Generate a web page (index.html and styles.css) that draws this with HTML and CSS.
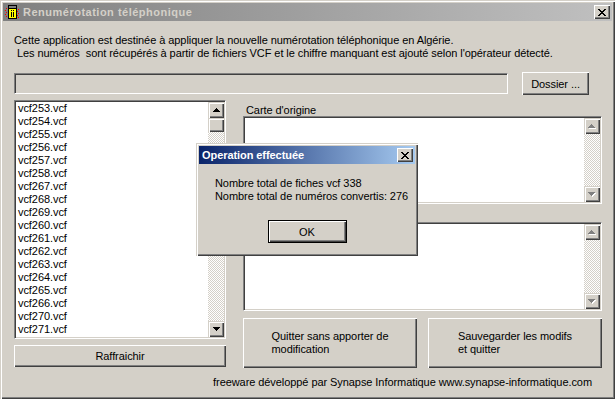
FILE: index.html
```html
<!DOCTYPE html>
<html lang="fr">
<head>
<meta charset="utf-8">
<title>Renumérotation téléphonique</title>
<link rel="stylesheet" href="styles.css">
</head>
<body>
<div class="window">
  <div class="titlebar">
    <svg class="app-icon" width="16" height="16" viewBox="0 0 16 16" shape-rendering="crispEdges">
      <rect x="4" y="1" width="9" height="14" fill="#000"/>
      <rect x="5" y="2" width="7" height="2" fill="#808080"/>
      <rect x="5" y="5" width="7" height="9" fill="#ffff00"/>
      <rect x="7" y="6" width="1" height="1" fill="#000"/>
      <rect x="9" y="6" width="1" height="1" fill="#000"/>
      <rect x="7" y="8" width="1" height="5" fill="#000"/>
      <rect x="9" y="8" width="1" height="5" fill="#000"/>
      <path d="M2 4h1v1H2zM1 6h1v1H1zM2 8h1v1H2zM1 10h1v1H1zM2 12h1v1H2zM14 5h1v1h-1zM13 7h1v1h-1zM14 9h1v1h-1zM13 11h1v1h-1zM14 13h1v1h-1z" fill="#ff0000"/>
    </svg>
    <span class="title">Renumérotation téléphonique</span>
    <span class="cap-btn">
      <svg width="8" height="7" viewBox="0 0 8 7" shape-rendering="crispEdges"><path d="M0 0h2v1H0zM6 0h2v1H6zM1 1h2v1H1zM5 1h2v1H5zM2 2h4v1H2zM3 3h2v1H3zM2 4h4v1H2zM1 5h2v1H1zM5 5h2v1H5zM0 6h2v1H0zM6 6h2v1H6z"/></svg>
    </span>
  </div>

  <div class="client">
    <p class="intro">Cette application est destinée à appliquer la nouvelle numérotation téléphonique en Algérie.<br>&nbsp;Les numéros&nbsp; sont récupérés à partir de fichiers VCF et le chiffre manquant est ajouté selon l'opérateur détecté.</p>

    <div class="path-row">
      <div class="path-field"></div>
      <button class="btn dossier">Dossier ...</button>
    </div>

    <div class="main">
      <div class="left">
        <div class="listbox">
          <ul class="items">
            <li>vcf253.vcf</li><li>vcf254.vcf</li><li>vcf255.vcf</li><li>vcf256.vcf</li>
            <li>vcf257.vcf</li><li>vcf258.vcf</li><li>vcf267.vcf</li><li>vcf268.vcf</li>
            <li>vcf269.vcf</li><li>vcf260.vcf</li><li>vcf261.vcf</li><li>vcf262.vcf</li>
            <li>vcf263.vcf</li><li>vcf264.vcf</li><li>vcf265.vcf</li><li>vcf266.vcf</li>
            <li>vcf270.vcf</li><li>vcf271.vcf</li><li>vcf272.vcf</li>
          </ul>
          <div class="vscroll">
            <span class="sb-btn"><svg width="7" height="4" shape-rendering="crispEdges"><path d="M3 0h1v1H3zM2 1h3v1H2zM1 2h5v1H1zM0 3h7v1H0z"/></svg></span>
            <span class="sb-btn thumb"></span>
            <span class="sb-track"></span>
            <span class="sb-btn"><svg width="7" height="4" shape-rendering="crispEdges"><path d="M0 0h7v1H0zM1 1h5v1H1zM2 2h3v1H2zM3 3h1v1H3z"/></svg></span>
          </div>
        </div>
        <button class="btn refresh">Raffraichir</button>
      </div>

      <div class="right">
        <span class="label">Carte d'origine</span>
        <div class="textbox tb1">
          <div class="tb-area"></div>
          <div class="vscroll">
            <span class="sb-btn"><svg width="8" height="5" shape-rendering="crispEdges"><path fill="#fff" d="M4 1h1v1H4zM3 2h3v1H3zM2 3h5v1H2zM1 4h7v1H1z"/><path fill="#808080" d="M3 0h1v1H3zM2 1h3v1H2zM1 2h5v1H1zM0 3h7v1H0z"/></svg></span>
            <span class="sb-track"></span>
            <span class="sb-btn"><svg width="8" height="5" shape-rendering="crispEdges"><path fill="#fff" d="M1 1h7v1H1zM2 2h5v1H2zM3 3h3v1H3zM4 4h1v1H4z"/><path fill="#808080" d="M0 0h7v1H0zM1 1h5v1H1zM2 2h3v1H2zM3 3h1v1H3z"/></svg></span>
          </div>
        </div>
        <div class="spacer"></div>
        <div class="textbox tb2">
          <div class="tb-area"></div>
          <div class="vscroll">
            <span class="sb-btn"><svg width="8" height="5" shape-rendering="crispEdges"><path fill="#fff" d="M4 1h1v1H4zM3 2h3v1H3zM2 3h5v1H2zM1 4h7v1H1z"/><path fill="#808080" d="M3 0h1v1H3zM2 1h3v1H2zM1 2h5v1H1zM0 3h7v1H0z"/></svg></span>
            <span class="sb-track"></span>
            <span class="sb-btn"><svg width="8" height="5" shape-rendering="crispEdges"><path fill="#fff" d="M1 1h7v1H1zM2 2h5v1H2zM3 3h3v1H3zM4 4h1v1H4z"/><path fill="#808080" d="M0 0h7v1H0zM1 1h5v1H1zM2 2h3v1H2zM3 3h1v1H3z"/></svg></span>
          </div>
        </div>
        <div class="actions">
          <button class="btn big"><span class="lines">Quitter sans apporter de<br>modification</span></button>
          <button class="btn big"><span class="lines">Sauvegarder les modifs<br>et quitter</span></button>
        </div>
      </div>
    </div>

    <div class="footer">freeware développé par Synapse Informatique www.synapse-informatique.com</div>
  </div>

  <div class="dialog">
    <div class="dlg-titlebar">
      <span class="dlg-title">Operation effectuée</span>
      <span class="cap-btn">
        <svg width="8" height="7" viewBox="0 0 8 7" shape-rendering="crispEdges"><path d="M0 0h2v1H0zM6 0h2v1H6zM1 1h2v1H1zM5 1h2v1H5zM2 2h4v1H2zM3 3h2v1H3zM2 4h4v1H2zM1 5h2v1H1zM5 5h2v1H5zM0 6h2v1H0zM6 6h2v1H6z"/></svg>
      </span>
    </div>
    <p class="dlg-text">Nombre total de fiches vcf 338<br>Nombre total de numéros convertis: 276</p>
    <div class="dlg-actions">
      <button class="btn ok">OK</button>
    </div>
  </div>
</div>
</body>
</html>
```

FILE: styles.css
```css
* { box-sizing: border-box; }

html, body {
  margin: 0;
  padding: 0;
}

body {
  width: 615px;
  height: 399px;
  overflow: hidden;
  font: 11px "Liberation Sans", Arial, sans-serif;
  letter-spacing: -0.07px;
  color: #000;
  background: #d4d0c8;
}

.window {
  position: relative;
  width: 615px;
  height: 399px;
  padding: 3px;
  background: #d4d0c8;
  box-shadow: inset 1px 1px #d4d0c8, inset 2px 2px #fff, inset -1px -1px #404040, inset -2px -2px #808080;
  display: flex;
  flex-direction: column;
}

/* title bar */
.titlebar {
  height: 18px;
  display: flex;
  align-items: center;
  padding-left: 1px;
  background: linear-gradient(to right, #808080, #c0c0c0);
}

.app-icon { flex: none; }

.title {
  margin-left: 3px;
  font-weight: bold;
  letter-spacing: 0.5px;
  color: #d4d0c8;
  white-space: nowrap;
}

.cap-btn {
  margin-left: auto;
  margin-right: 2px;
  width: 16px;
  height: 14px;
  display: flex;
  align-items: center;
  justify-content: center;
  background: #d4d0c8;
  box-shadow: inset 1px 1px #fff, inset -1px -1px #404040, inset -2px -2px #808080;
}

/* client */
.client {
  flex: 1;
  padding: 13px 10px 0 11px;
  display: flex;
  flex-direction: column;
}

.intro {
  margin: 0;
  line-height: 13px;
  white-space: nowrap;
}

.path-row {
  margin-top: 12px;
  display: flex;
  align-items: flex-start;
}

.path-field {
  width: 494px;
  height: 21px;
  margin-top: 1px;
  background: #d4d0c8;
  border: 1px solid;
  border-color: #808080 #fff #fff #808080;
  box-shadow: inset 1px 1px #404040, inset -1px -1px #d4d0c8;
}

.btn {
  border: none;
  padding: 0;
  margin: 0;
  background: #d4d0c8;
  font: inherit;
  letter-spacing: inherit;
  color: #000;
  box-shadow: inset 1px 1px #fff, inset -1px -1px #404040, inset -2px -2px #808080;
}

.dossier {
  margin-left: 14px;
  width: 67px;
  height: 23px;
}

.main {
  margin-top: 5px;
  display: grid;
  grid-template-columns: 212px 359px;
  column-gap: 17px;
}

.left {
  display: flex;
  flex-direction: column;
}

.listbox {
  height: 239px;
  display: flex;
  background: #fff;
  border: 1px solid;
  border-color: #808080 #fff #fff #808080;
  box-shadow: inset 1px 1px #404040, inset -1px -1px #d4d0c8;
  padding: 1px;
}

.items {
  flex: 1;
  list-style: none;
  margin: 0;
  padding: 0 2px;
  overflow: hidden;
}

.items li {
  height: 13px;
  line-height: 13px;
  white-space: nowrap;
}

.vscroll {
  width: 16px;
  flex: none;
  display: flex;
  flex-direction: column;
}

.sb-btn {
  height: 16px;
  flex: none;
  display: flex;
  align-items: center;
  justify-content: center;
  background: #d4d0c8;
  box-shadow: inset 1px 1px #d4d0c8, inset 2px 2px #fff, inset -1px -1px #404040, inset -2px -2px #808080;
}

.sb-btn.thumb { height: 14px; }

.sb-track {
  flex: 1;
  background: repeating-conic-gradient(#fff 0 25%, #d4d0c8 0 50%) 0 0 / 2px 2px;
}

.refresh {
  margin-top: 6px;
  height: 22px;
}

.right {
  display: flex;
  flex-direction: column;
  padding-top: 4px;
}

.label {
  display: block;
  height: 12px;
  line-height: 12px;
  padding-left: 3px;
}

.textbox {
  display: flex;
  background: #fff;
  border: 1px solid;
  border-color: #808080 #fff #fff #808080;
  box-shadow: inset 1px 1px #404040, inset -1px -1px #d4d0c8;
  padding: 1px;
}

.tb-area { flex: 1; }

.tb1 { height: 88px; }
.spacer { height: 18px; }
.tb2 { height: 89px; }

.actions {
  margin-top: 7px;
  display: grid;
  grid-template-columns: 174px 174px;
  column-gap: 11px;
}

.big {
  height: 50px;
  display: flex;
  align-items: center;
  justify-content: center;
}

.lines {
  display: inline-block;
  text-align: left;
  line-height: 13px;
}

.footer {
  margin-top: 8px;
  line-height: 13px;
  text-align: right;
  padding-right: 10px;
  white-space: nowrap;
}

/* dialog */
.dialog {
  position: absolute;
  left: 196px;
  top: 143px;
  width: 222px;
  height: 113px;
  padding: 3px;
  background: #d4d0c8;
  box-shadow: inset 1px 1px #d4d0c8, inset 2px 2px #fff, inset -1px -1px #404040, inset -2px -2px #808080;
}

.dlg-titlebar {
  height: 18px;
  display: flex;
  align-items: center;
  padding-left: 3px;
  background: linear-gradient(to right, #0a246a, #a6caf0);
}

.dlg-title {
  font-weight: bold;
  color: #fff;
  white-space: nowrap;
}

.dlg-text {
  margin: 13px 0 0 16px;
  line-height: 13px;
  white-space: nowrap;
}

.dlg-actions {
  margin-top: 17px;
  display: flex;
  justify-content: center;
}

.ok {
  width: 79px;
  height: 23px;
  border: 1px solid #000;
}
```
